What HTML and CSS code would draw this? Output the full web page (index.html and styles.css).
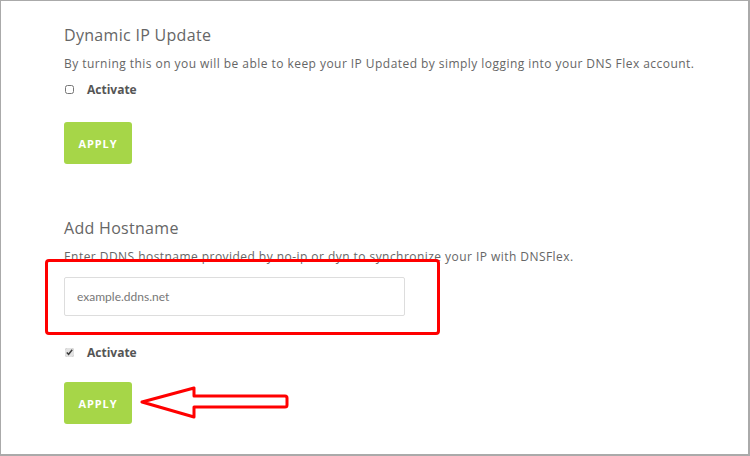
FILE: index.html
```html
<!DOCTYPE html>
<html lang="en">
<head>
    <meta charset="UTF-8">
    <meta name="viewport" content="width=device-width, initial-scale=1.0">
    <title>Dynamic IP Update</title>
    <link rel="stylesheet" href="styles.css">
</head>
<body>
    <div class="panel">
        <div class="section">
            <h2>Dynamic IP Update</h2>
            <p>By turning this on you will be able to keep your IP Updated by simply logging into your DNS Flex account.</p>
            <label class="check"><input type="checkbox"> Activate</label>
            <button class="apply">APPLY</button>
        </div>

        <div class="section second">
            <h2>Add Hostname</h2>
            <p>Enter DDNS hostname provided by no-ip or dyn to synchronize your IP with DNSFlex.</p>
            <div class="host-wrap">
                <input type="text" class="host" placeholder="example.ddns.net">
                <div class="mark-box"></div>
            </div>
            <label class="check"><input type="checkbox" checked> Activate</label>
            <div class="apply-row">
                <button class="apply">APPLY</button>
                <svg class="mark-arrow" width="152" height="34" viewBox="0 0 152 34">
                    <path d="M2 16 L54 2 L54 10 L145 10 Q147 10 147 12 L147 19 Q147 21 145 21 L54 21 L54 31 Z"
                          fill="none" stroke="#ff0000" stroke-width="3" stroke-linejoin="round"/>
                </svg>
            </div>
        </div>
    </div>
</body>
</html>
```

FILE: styles.css
```css
* {
    box-sizing: border-box;
}
html, body {
    margin: 0;
    background: #fff;
}
body {
    font-family: "Open Sans", Arial, sans-serif;
    color: #666;
}
.panel {
    width: 750px;
    height: 456px;
    border: 1px solid #aaa;
    border-right-width: 2px;
    border-bottom-width: 2px;
    padding: 23px 0 0 63px;
}
.second {
    margin-top: 53px;
}
h2 {
    margin: 0;
    font-size: 16px;
    font-weight: 400;
    color: #666;
    letter-spacing: 0.3px;
}
p {
    margin: 9px 0 0;
    font-size: 12px;
    color: #666;
    letter-spacing: 0.45px;
}
.check {
    display: flex;
    align-items: center;
    margin-top: 9px;
    font-size: 12px;
    font-weight: 700;
    color: #555;
}
.second .check {
    margin-top: 28px;
}
.check input {
    width: 9px;
    height: 9px;
    margin: 0 13px 0 1px;
    accent-color: #e2e2e2;
}
.apply {
    display: block;
    width: 68px;
    height: 42px;
    margin-top: 24px;
    border: none;
    border-radius: 3px;
    background: #a6d648;
    color: #fff;
    font-family: "Open Sans", Arial, sans-serif;
    font-size: 11px;
    font-weight: 700;
    letter-spacing: 0.9px;
    padding: 0;
}
.apply-row {
    position: relative;
    margin-top: 21px;
}
.apply-row .apply {
    margin-top: 0;
}
.host-wrap {
    position: relative;
    margin-top: 12px;
}
.host {
    display: block;
    width: 341px;
    height: 39px;
    padding: 0 12px;
    border: 1px solid #ddd;
    border-radius: 2px;
    font-family: "Lato", Arial, sans-serif;
    font-size: 12px;
    color: #666;
}
.host::placeholder {
    color: #777;
}
.mark-box {
    position: absolute;
    left: -19px;
    top: -18px;
    width: 395px;
    height: 76px;
    border: 3px solid #ff0000;
    border-radius: 4px;
}
.mark-arrow {
    position: absolute;
    left: 76px;
    top: 4px;
}
```
